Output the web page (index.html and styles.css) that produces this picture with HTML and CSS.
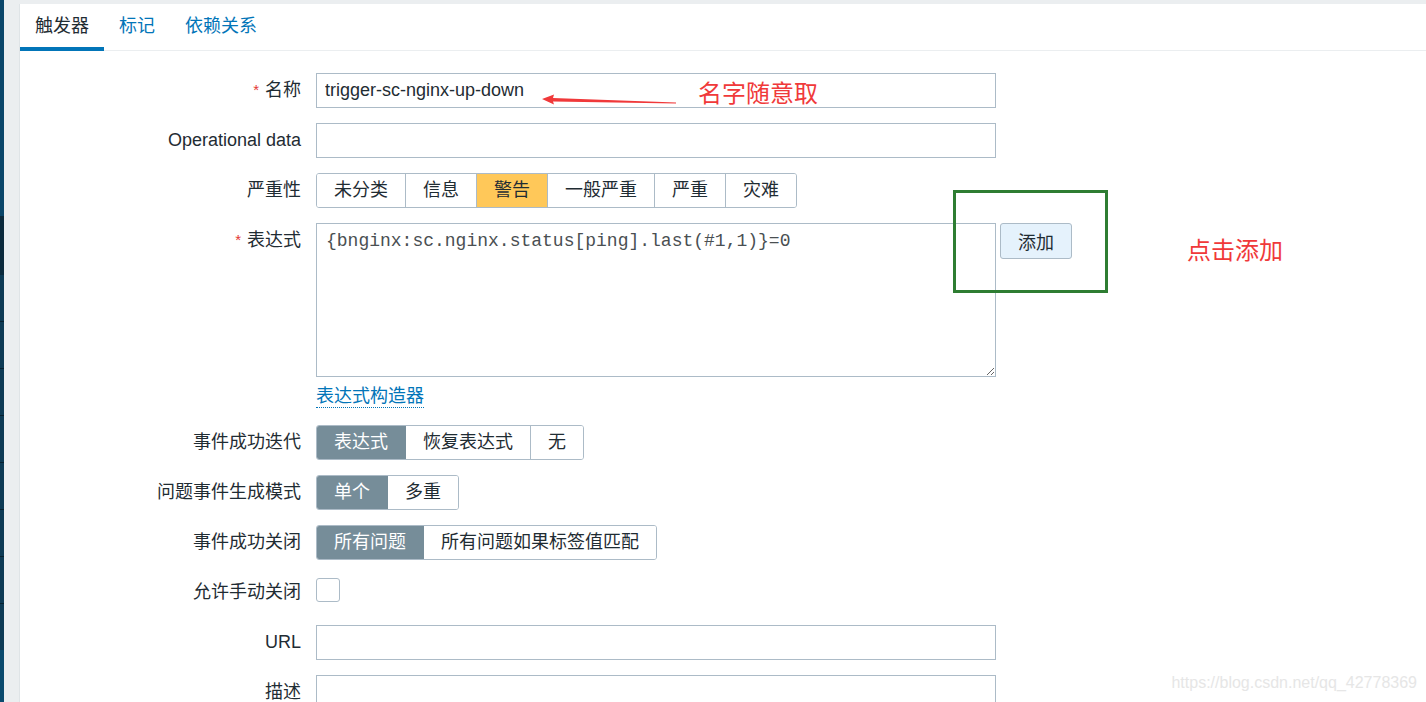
FILE: index.html
```html
<!DOCTYPE html>
<html lang="zh-CN">
<head>
    <meta charset="UTF-8">
    <meta name="viewport" content="width=device-width, initial-scale=1.0">
    <title>触发器</title>
    <link rel="stylesheet" href="styles.css">
</head>
<body>

<div class="layout">
    <aside class="sidebar">
        <div class="nav-top"></div>
        <div class="nav-item current"></div>
        <div class="nav-item"></div>
        <div class="nav-item"></div>
        <div class="nav-item"></div>
        <div class="nav-item"></div>
        <div class="nav-item"></div>
        <div class="nav-item"></div>
        <div class="nav-item"></div>
        <div class="nav-item"></div>
    </aside>

    <main class="content">
        <div class="panel">
            <ul class="tabs">
                <li class="tab active">触发器</li>
                <li class="tab">标记</li>
                <li class="tab">依赖关系</li>
            </ul>

            <form class="form">
                <div class="row">
                    <label class="label"><span class="req">*</span>名称</label>
                    <div class="field">
                        <input class="text" type="text" value="trigger-sc-nginx-up-down">
                    </div>
                </div>

                <div class="row">
                    <label class="label">Operational data</label>
                    <div class="field">
                        <input class="text" type="text">
                    </div>
                </div>

                <div class="row">
                    <label class="label">严重性</label>
                    <div class="field">
                        <div class="segments">
                            <span class="seg">未分类</span>
                            <span class="seg">信息</span>
                            <span class="seg warning">警告</span>
                            <span class="seg">一般严重</span>
                            <span class="seg">严重</span>
                            <span class="seg">灾难</span>
                        </div>
                    </div>
                </div>

                <div class="row">
                    <label class="label"><span class="req">*</span>表达式</label>
                    <div class="field">
                        <div class="expr">
                            <textarea class="expr-input" spellcheck="false">{bnginx:sc.nginx.status[ping].last(#1,1)}=0</textarea>
                            <button type="button" class="btn-add">添加</button>
                        </div>
                        <a class="builder" href="#">表达式构造器</a>
                    </div>
                </div>

                <div class="row">
                    <label class="label">事件成功迭代</label>
                    <div class="field">
                        <div class="segments">
                            <span class="seg on">表达式</span>
                            <span class="seg">恢复表达式</span>
                            <span class="seg">无</span>
                        </div>
                    </div>
                </div>

                <div class="row">
                    <label class="label">问题事件生成模式</label>
                    <div class="field">
                        <div class="segments">
                            <span class="seg on">单个</span>
                            <span class="seg">多重</span>
                        </div>
                    </div>
                </div>

                <div class="row">
                    <label class="label">事件成功关闭</label>
                    <div class="field">
                        <div class="segments">
                            <span class="seg on">所有问题</span>
                            <span class="seg">所有问题如果标签值匹配</span>
                        </div>
                    </div>
                </div>

                <div class="row">
                    <label class="label">允许手动关闭</label>
                    <div class="field">
                        <span class="checkbox"></span>
                    </div>
                </div>

                <div class="row">
                    <label class="label">URL</label>
                    <div class="field">
                        <input class="text" type="text">
                    </div>
                </div>

                <div class="row">
                    <label class="label">描述</label>
                    <div class="field">
                        <input class="text" type="text">
                    </div>
                </div>
            </form>

            <!-- notes drawn on top of the form -->
            <svg class="note-arrow" width="140" height="16" viewBox="0 0 140 16">
                <polygon points="2,7 14,2.5 13,6 136,10.4 136,11.6 13,9.5 14,12.5" fill="#f0393a"/>
            </svg>
            <div class="note note-name">名字随意取</div>
            <div class="note-box"></div>
            <div class="note note-add">点击添加</div>
            <div class="watermark">https://blog.csdn.net/qq_42778369</div>
        </div>
    </main>
</div>

</body>
</html>
```

FILE: styles.css
```css
html, body {
    margin: 0;
    height: 100%;
}

body {
    font-family: 'Liberation Sans', Arial, 'Noto Sans CJK SC', sans-serif;
    font-size: 18px;
    color: #1f2c33;
    background-color: #ebeef0;
    overflow: hidden;
}

.layout {
    display: flex;
    height: 100vh;
}

/* Sidebar (only a sliver is visible) */
.sidebar {
    width: 4px;
    flex: none;
    display: flex;
    flex-direction: column;
    background-color: #0a4a6e;
}

.nav-top {
    height: 216px;
    background-color: #0a466a;
}

.nav-item {
    height: 46px;
    background-color: #0d3a55;
    border-bottom: 1px solid #06202f;
}

.nav-item.current {
    height: 59px;
    background-color: #0b2a3d;
    border-bottom: none;
}

.nav-item:last-child {
    border-bottom: none;
}

/* Main area */
.content {
    flex: 1;
    padding: 4px 0 0 16px;
    min-width: 0;
}

.panel {
    position: relative;
    background-color: #fff;
    height: 100%;
    box-shadow: -1px 0 0 #dfe4e7;
}

/* Tabs */
.tabs {
    display: flex;
    margin: 0;
    padding: 0;
    list-style: none;
    height: 46px;
    border-bottom: 1px solid #ebeef0;
}

.tab {
    padding: 0 15px;
    line-height: 44px;
    color: #0275b8;
    border-bottom: 4px solid transparent;
    margin-bottom: -1px;
}

.tab.active {
    color: #1f2c33;
    border-bottom-color: #0275b8;
}

/* Form */
.form {
    display: flex;
    flex-direction: column;
    gap: 15px;
    padding-top: 22px;
}

.row {
    display: grid;
    grid-template-columns: 281px 1fr;
    column-gap: 15px;
    align-items: start;
}

.label {
    height: 35px;
    text-align: right;
    line-height: 35px;
    white-space: nowrap;
}

.req {
    color: #e33734;
    font-size: 15px;
    line-height: 0;
    margin-right: 6px;
    vertical-align: 1px;
}

.field {
    display: flex;
    flex-direction: column;
    align-items: flex-start;
}

.text {
    box-sizing: border-box;
    width: 680px;
    height: 35px;
    margin: 0;
    padding: 0 8px;
    border: 1px solid #acbbc7;
    border-radius: 0;
    font-family: inherit;
    font-size: 18px;
    color: #1f2c33;
    background-color: #fff;
    outline: none;
}

/* Segmented radio buttons */
.segments {
    display: inline-flex;
    height: 35px;
    border: 1px solid #acbbc7;
    border-radius: 3px;
    box-sizing: border-box;
    overflow: hidden;
}

.seg {
    padding: 0 17px;
    line-height: 33px;
    border-left: 1px solid #acbbc7;
    background-color: #fff;
    white-space: nowrap;
}

.seg:first-child {
    border-left: none;
}

.seg.warning {
    background-color: #ffc859;
}

.seg.on {
    background-color: #768d99;
    border-left-color: #768d99;
    color: #fff;
}

.seg.on + .seg {
    border-left-color: #768d99;
}

/* Expression */
.expr {
    display: flex;
    gap: 4px;
    align-items: flex-start;
}

.expr-input {
    box-sizing: border-box;
    width: 680px;
    height: 154px;
    margin: 0;
    padding: 6px 9px;
    border: 1px solid #acbbc7;
    border-radius: 0;
    font-family: 'Liberation Mono', 'Courier New', monospace;
    font-size: 18px;
    line-height: 22px;
    color: #4a4f52;
    resize: both;
    outline: none;
}

.btn-add {
    height: 36px;
    width: 72px;
    padding: 0;
    font-family: inherit;
    font-size: 18px;
    color: #1f2c33;
    background-color: #e5f2fc;
    border: 1px solid #acbbc7;
    border-radius: 3px;
}

.builder {
    margin-top: 8px;
    margin-bottom: 2px;
    line-height: 22px;
    color: #0275b8;
    text-decoration: none;
    border-bottom: 1px dotted #0275b8;
}

.checkbox {
    display: block;
    box-sizing: border-box;
    width: 24px;
    height: 24px;
    margin-top: 3px;
    border: 1px solid #acbbc7;
    border-radius: 3px;
    background-color: #fff;
}

/* Notes over the form */
.note {
    position: absolute;
    font-family: 'Noto Sans CJK SC', sans-serif;
    font-size: 24px;
    line-height: 32px;
    color: #f0393a;
    white-space: nowrap;
}

.note-name {
    left: 678px;
    top: 72px;
}

.note-add {
    left: 1167px;
    top: 229px;
}

.note-arrow {
    position: absolute;
    left: 520px;
    top: 88px;
}

.note-box {
    position: absolute;
    left: 933px;
    top: 186px;
    width: 155px;
    height: 103px;
    box-sizing: border-box;
    border: 3px solid #2e7d32;
}

.watermark {
    position: absolute;
    right: 9px;
    top: 669px;
    font-family: 'Liberation Sans', Arial, sans-serif;
    font-size: 16px;
    line-height: 20px;
    color: #e6e6e6;
}
```
